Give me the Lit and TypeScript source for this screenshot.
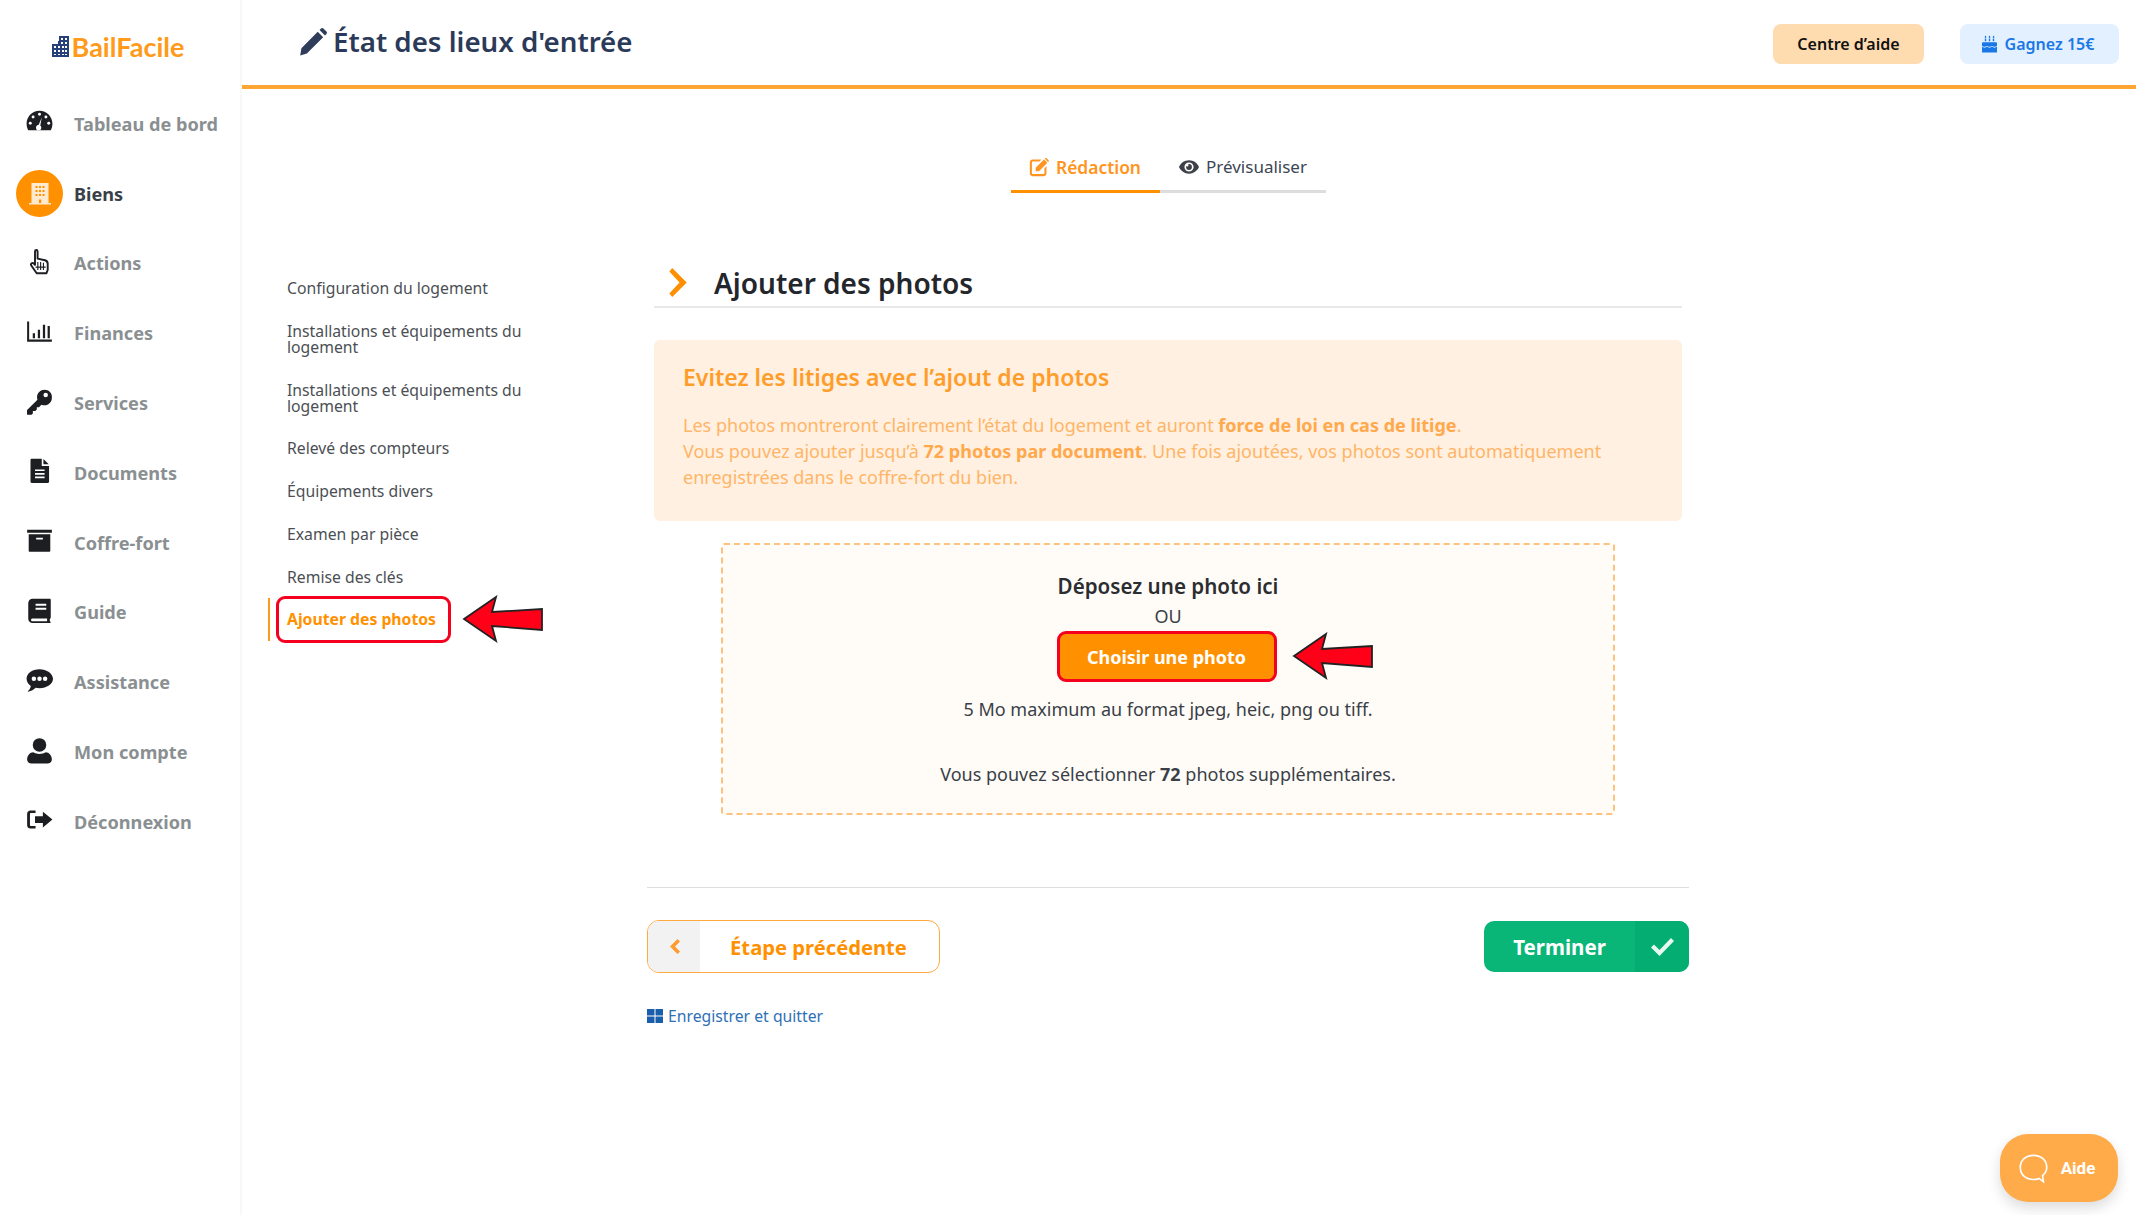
import { LitElement, html, css, svg } from "lit";
import { customElement } from "lit/decorators.js";

const ICONS: Record<string, unknown> = {
  gauge: svg`<path d="M12 2.500C5.600 2.500.5 7.600.5 14c0 1.800.4 3.500 1.100 5 .2.500.7.800 1.200.8h18.400c.5 0 1-.3 1.200-.8.7-1.500 1.100-3.200 1.100-5C23.500 7.600 18.400 2.500 12 2.500z"/><g fill="#fff"><circle cx="12" cy="5.500" r="1.300"/><circle cx="6.300" cy="8" r="1.300"/><circle cx="17.700" cy="8" r="1.300"/><circle cx="3.800" cy="13.500" r="1.300"/><circle cx="20.200" cy="13.500" r="1.300"/><path d="M14 8.500l-1.300 7c.6.500.9 1.200.9 2 0 .9-.4 1.700-1.100 2.300H9.900c-.7-.6-1-1.400-1-2.300 0-1.400 1-2.500 2.400-2.600z"/></g>`,
  hand: svg`<path fill="none" stroke="currentColor" stroke-width="1.700" stroke-linejoin="round" d="M8 3C8 1.300 10.300 1.300 10.300 3V9.500l6.500 1.400c1.500.4 2.500 1.400 2.500 3V19c0 .6-.2 1.200-.5 1.700l-.7 1.800H9.500L4.700 15.500c-1-1.500 1-3 2.200-1.700L8 15z"/><path stroke="currentColor" stroke-width="1" d="M10.500 12.500v7M13 12.500v7M15.500 13v6.500M8.500 17h9"/>`,
  chart: svg`<path d="M1 3h1.800v16.200H23V21H1z"/><path d="M6 13.500h2v4.500H6zM10.500 10.500h2V18h-2zM15 6h2v12h-2zM19.200 7h2v11h-2z"/>`,
  key: svg`<path fill-rule="evenodd" d="M23 7.500C23 4 20 1.500 16.500 1.500c-3.700 0-6.700 3-6.700 6.700 0 .8.100 1.500.4 2.200L1.200 19.300c-.2.200-.3.400-.3.700v3c0 .5.400.8.800.8h3.200l1.200-1.200v-2.200h2.200l1.300-1.300v-2h2l2.100-2.300c.9.400 1.800.6 2.800.6 3.700 0 6.500-3 6.500-6.700zm-3.500-1.300a2 2 0 1 1-4 0 2 2 0 0 1 4 0z"/>`,
  file: svg`<path fill-rule="evenodd" d="M4 2.500C4 2 4.500 1.500 5 1.500h9v6.500h6.500v14c0 .5-.5 1-1 1H5c-.5 0-1-.5-1-1zM8 11v1.500h8.500V11zm0 3.200v1.500h8.500v-1.500zm0 3.200v1.500h8.500v-1.500z"/><path d="M15.500 1.800l4.700 4.700h-4.700z"/>`,
  archive: svg`<path fill-rule="evenodd" d="M1 2.500h22v2.500H1zM2.400 6.500h19.200V21c0 .5-.4 1-1 1H3.400c-.6 0-1-.5-1-1zM9 9.500v1.500h6V9.500z"/>`,
  book: svg`<path fill-rule="evenodd" d="M6 1.500h15c.6 0 1 .4 1 1v15.800c0 .5-.5.800-.7 1-.2.600-.2 1.700 0 2.200.3.200.7.500.7 1 0 .3-.3.500-.8.500H6c-2.400 0-4-1.400-4-3.700V5.500c0-2.300 1.600-4 4-4zm2.500 4.500v1.800h9.500V6zm0 3.500v1.800h9.500V9.500zM5.800 19.200c-.8 0-1.300.5-1.300 1.200s.5 1.100 1.300 1.100h13a9 9 0 0 1 0-2.300z"/>`,
  chat: svg`<path fill-rule="evenodd" d="M12 2C5.600 2 .5 5.600.5 10.500c0 2.600 1.500 4.900 3.800 6.400-.3 2-1.300 3.400-3 5 2.800-.3 5.300-1.400 7.300-3.400 1.100.2 2.200.4 3.400.4 6.400 0 12-3.800 12-8.400S18.400 2 12 2zM7 8.500a2 2 0 1 1 0 4 2 2 0 0 1 0-4zm5 0a2 2 0 1 1 0 4 2 2 0 0 1 0-4zm5 0a2 2 0 1 1 0 4 2 2 0 0 1 0-4z"/>`,
  user: svg`<circle cx="12" cy="7" r="6"/><path d="M1 20c0-3.500 2.500-6.500 5.500-6.500 1.500 1 3.500 1.500 5.500 1.500s4-.5 5.500-1.500c3 0 5.500 3 5.500 6.500 0 2-1.500 3.500-3.500 3.500h-15C2.500 23.500 1 22 1 20z"/>`,
  signout: svg`<path d="M23.500 12L15 5v4H8v6h7v4z"/><path d="M8.500 4H4C2.300 4 1 5.300 1 7v10c0 1.700 1.300 3 3 3h4.500v-2.200H4.500c-.6 0-1-.4-1-1V7.200c0-.6.400-1 1-1h4z"/>`,
};

const NAV = [
  ["gauge", "Tableau de bord"],
  ["building", "Biens"],
  ["hand", "Actions"],
  ["chart", "Finances"],
  ["key", "Services"],
  ["file", "Documents"],
  ["archive", "Coffre-fort"],
  ["book", "Guide"],
  ["chat", "Assistance"],
  ["user", "Mon compte"],
  ["signout", "Déconnexion"],
];

const STEPS = [
  "Configuration du logement",
  "Installations et équipements du logement",
  "Installations et équipements du logement",
  "Relevé des compteurs",
  "Équipements divers",
  "Examen par pièce",
  "Remise des clés",
];

const arrow = html`<svg class="arrow" viewBox="-2 -2 84 50" aria-hidden="true"><polygon points="0,22 32,0 28,15 78,12 78,33 28,29 32,44" fill="#ff0018" stroke="#222" stroke-width="1.800" /></svg>`;

@customElement("app-root")
export class AppRoot extends LitElement {
  static styles = css`
    :host { display: block; font-family: "Noto Sans", "Liberation Sans", sans-serif; color: #333; background: #fff; }
    * , *::before, *::after { box-sizing: border-box; }
    .app { display: grid; grid-template-columns: 242px 1fr; height: 1215px; position: relative; overflow: hidden; }
    aside { border-right: 2px solid #f8f8f8; }
    .logo { height: 89px; display: flex; align-items: center; justify-content: center; gap: 3px; font-family: Lato, sans-serif; font-weight: 700; font-size: 27px; color: #ff9a1a; padding: 4px 4px 0 0; }
    .logo svg { width: 17px; height: 21px; }
    .navitem { height: 69.800px; display: flex; align-items: center; font-size: 18.150px; font-weight: 700; color: #8a8f92; }
    .navitem.on { color: #3a3f47; }
    .ic { width: 47px; height: 47px; margin: 0 11px 0 16px; flex: none; display: flex; align-items: center; justify-content: center; color: #1c1e21; border-radius: 50%; }
    .ic svg { width: 27px; height: 27px; fill: currentColor; position: relative; top: -2px; }
    .on .ic { background: #ff9100; }
    .on .ic svg { width: 22px; height: 22px; top: 0; }
    header { height: 89px; border-bottom: 4px solid #ffa534; display: flex; align-items: center; padding: 3px 17px 0 57px; }
    h1 { margin: 0; flex: 1; display: flex; align-items: center; gap: 5px; font-size: 27.700px; font-weight: 600; color: #2b3a58; line-height: 1; position: relative; top: -2.500px; }
    h1 svg { width: 29px; height: 29px; fill: #2f3d5a; }
    .hbtn { height: 40px; border-radius: 8px; display: flex; align-items: center; justify-content: center; font-size: 16px; font-weight: 600; }
    .help { width: 151px; background: #ffdbb0; color: #111; margin-right: 36px; }
    .gift { width: 159px; background: #e2f0ff; color: #1a78e6; gap: 8px; padding-right: 3px; }
    .gift svg { width: 15px; height: 18px; fill: #1a78e6; }
    .tabs { margin: 54px 0 0 405px; width: 1042px; display: flex; justify-content: center; }
    .tab { height: 50px; border-bottom: 3px solid #ddd; display: flex; align-items: center; justify-content: center; gap: 7px; font-size: 17px; color: #3c4654; }
    .tab svg { width: 20px; height: 20px; }
    .tab.on { width: 149px; border-color: #ff9100; color: #ff9420; font-weight: 600; font-size: 17.400px; }
    .tab.off { width: 166px; padding-left: 1px; }
    .body { display: grid; grid-template-columns: 405px 1042px; }
    .steps { padding: 87px 0 0 45px; display: flex; flex-direction: column; gap: 26.750px; list-style: none; margin: 0; }
    .steps li { width: 250px; font-size: 15.750px; line-height: 16px; color: #4b4f54; position: relative; }
    .steps li.cur { color: #ff9100; font-weight: 700; }
    .steps li.cur::before { content: ""; position: absolute; left: -11px; right: 86px; top: -15.500px; height: 47px; border: 3px solid #f5001e; border-radius: 9px; }
    .steps li.cur::after { content: ""; position: absolute; left: -19px; top: -13px; height: 43px; width: 2px; background: #ff9a1a; }
    .arrow { position: absolute; width: 84px; height: 50px; }
    .steps .arrow { left: 175px; top: -16px; }
    .content { padding: 0 7px; }
    .h2 { height: 43px; margin-top: 72px; border-bottom: 2px solid #e9e9e9; display: flex; align-items: center; font-size: 28px; font-weight: 600; color: #23262b; }
    .h2 svg { width: 20px; height: 29px; margin: 0 25px 6px 15px; fill: #ff8f00; flex: none; }
    .h2 span { position: relative; top: -3px; }
    .alert { margin-top: 32px; background: #fff0e1; border-radius: 6px; height: 181px; padding: 22px 29px; color: #ffb566; font-size: 18.050px; line-height: 26px; }
    .alert h3 { margin: 0 0 20px; font-size: 23px; line-height: 30px; font-weight: 600; color: #ff9d2b; }
    .alert b { font-weight: 700; color: #ffa84c; }
    .drop { margin: 22px 67px 0; height: 272px; border: 2px dashed #ffc27e; background: #fffcf8; border-radius: 3px; display: flex; flex-direction: column; align-items: center; padding-top: 25px; font-size: 18px; color: #3a3f47; }
    .drop .t { font-size: 20.600px; font-weight: 600; line-height: 32px; color: #2b2d31; }
    .drop .ou { line-height: 28px; }
    .choose { position: relative; width: 220px; height: 51px; flex: none; border: 3px solid #f5001e; border-radius: 9px; background: #ff9100; color: #fff; font-size: 18px; font-weight: 700; display: flex; align-items: center; justify-content: center; margin: 1px 3px 0 0; }
    .choose .arrow { left: 232px; top: -2px; }
    .drop .m { margin-top: 14px; line-height: 26px; }
    .drop .s { margin-top: 39px; line-height: 26px; }
    .drop .s b { font-weight: 700; }
    .rule { height: 1px; background: #dedede; margin: 72px -7px 0; }
    .actions { margin: 32px -7px 0; display: flex; justify-content: space-between; align-items: flex-start; }
    .prev { width: 293px; height: 53px; border: 1.500px solid #ffa93f; border-radius: 12px; display: flex; overflow: hidden; color: #ff9100; font-size: 20.200px; font-weight: 700; }
    .prev i { width: 52px; background: #f2f2f2; display: flex; align-items: center; justify-content: center; }
    .prev i svg { width: 11px; height: 15px; fill: #ff9a2e; }
    .prev span { flex: 1; display: flex; align-items: center; justify-content: center; padding-right: 2px; }
    .done { width: 205px; height: 51px; margin-top: 1px; border-radius: 10px; overflow: hidden; display: flex; background: #09b678; color: #fff; font-size: 20.500px; font-weight: 700; }
    .done span { flex: 1; display: flex; align-items: center; justify-content: center; }
    .done i { width: 54px; background: #04ad71; display: flex; align-items: center; justify-content: center; }
    .done i svg { width: 23px; height: 18px; fill: #e6f8f0; }
    .save { margin: 33px -7px 0; display: flex; align-items: center; gap: 5px; font-size: 15.750px; color: #2f70b5; line-height: 20px; }
    .save svg { width: 16px; height: 16px; fill: #1a5fab; }
    .aide { position: absolute; left: 2000px; top: 1134px; width: 118px; height: 68px; padding-right: 6px; border-radius: 28px; background: #ffab4a; box-shadow: 0 6px 14px rgba(0,0,0,.14); display: flex; align-items: center; justify-content: center; gap: 11px; color: #fff; font: 700 17px Roboto, sans-serif; }
    .aide svg { width: 33px; height: 33px; fill: none; stroke: #fff; stroke-width: 1.500; }
  `;

  private icon(n: string) {
    if (n === "building") {
      return html`<svg viewBox="0 0 22 22"><path fill="#ffe9cf" fill-rule="evenodd" d="M2.500 0h17v20H22v1.500H0V20h2.500zM6.500 3v2h2V3zm3.500 0v2h2V3zm3.500 0v2h2V3zM6.500 7v2h2V7zM10 7v2h2V7zm3.500 0v2h2V7zM6.500 11v2h2v-2zm3.500 0v2h2v-2zm3.500 0v2h2v-2zM10 16.500V20h2.200v-3.500z"/></svg>`;
    }
    return html`<svg viewBox="0 0 24 24">${ICONS[n]}</svg>`;
  }

  render() {
    return html`<div class="app">
      <aside>
        <div class="logo">
          <svg viewBox="0 0 17 21"><path fill="#27407a" fill-rule="evenodd" d="M0 8h6V5h1V0h10v21H0zM9 2v2h2V2zm4 0v2h2V2zM9 6v2h2V6zm4 0v2h2V6zM2 10v2h2v-2zm4 0v2h2v-2zm4 0v2h2v-2zm3 0v2h2v-2zM2 14v2h2v-2zm4 0v2h2v-2zm4 0v2h2v-2zm3 0v2h2v-2zM2 18v1h2v-1zm4 0v1h2v-1zm4 0v1h2v-1zm3 0v1h2v-1z"/></svg>
          <span>BailFacile</span>
        </div>
        <nav>
          ${NAV.map(([i, t]) => html`<div class="navitem ${t === "Biens" ? "on" : ""}"><span class="ic">${this.icon(i)}</span>${t}</div>`)}
        </nav>
      </aside>
      <main>
        <header>
          <h1>
            <svg viewBox="0 0 24 24"><path d="M2 17.500L15.500 4l4.500 4.500L6.500 22 1 23.500zM17 2.500l1.200-1.200c.6-.6 1.500-.6 2 0l2.500 2.500c.6.600.6 1.400 0 2L21.500 7z"/></svg>
            État des lieux d'entrée
          </h1>
          <div class="hbtn help">Centre d’aide</div>
          <div class="hbtn gift">
            <svg viewBox="0 0 16 18"><path d="M0 12c1.300 0 1.300 1 2.700 1s1.300-1 2.600-1 1.400 1 2.700 1 1.300-1 2.700-1 1.300 1 2.600 1 1.400-1 2.700-1v6H0zM1 7h14c.6 0 1 .4 1 1v3c-1.300 0-1.400 1-2.700 1s-1.300-1-2.600-1-1.400 1-2.700 1-1.300-1-2.700-1-1.300 1-2.600 1S1.300 11 0 11V8c0-.6.400-1 1-1zM3 3h1.500v3H3zm4.250 0h1.500v3h-1.500zm4.250 0H13v3h-1.500zM3.700 0c.7.800.9 1.300.9 1.700 0 .4-.4.800-.9.800s-.8-.4-.8-.8c0-.4.200-.9.800-1.700zm4.300 0c.7.800.9 1.300.9 1.700 0 .4-.4.800-.9.800s-.8-.4-.8-.8c0-.4.200-.9.800-1.700zm4.300 0c.7.800.9 1.300.9 1.700 0 .4-.4.800-.9.800s-.8-.4-.8-.8c0-.4.200-.9.800-1.700z"/></svg>
            Gagnez 15€
          </div>
        </header>
        <div class="tabs">
          <div class="tab on">
            <svg viewBox="0 0 24 24" fill="#ff9420"><path d="M4.500 3H15l-2.500 2.500h-8c-.6 0-1 .4-1 1v13c0 .6.400 1 1 1h13c.6 0 1-.4 1-1v-6l2.500-2.500v8.500c0 2-1.600 3.500-3.500 3.500h-13C2.500 23 1 21.500 1 19.500v-13C1 4.500 2.500 3 4.500 3z"/><path d="M8 13L18 3l4 4-10 10H8zM19.500 1.500c.5-.5 1.200-.5 1.700 0l2.300 2.300c.5.500.5 1.200 0 1.700L23 6.200 19 2.200z"/></svg>
            Rédaction
          </div>
          <div class="tab off">
            <svg viewBox="0 0 24 16" fill="#3c4148"><path fill-rule="evenodd" d="M12 0c5.500 0 9.800 3.300 12 8-2.200 4.700-6.500 8-12 8S2.200 12.700 0 8c2.200-4.700 6.500-8 12-8zm0 2.500a5.500 5.500 0 1 0 0 11 5.500 5.500 0 0 0 0-11zM12 4.500a3.500 3.500 0 1 1-3.500 3.500c0-.5.100-.9.300-1.300.3.400.7.600 1.200.6a1.500 1.500 0 0 0 1-2.500c.3-.2.600-.3 1-.3z"/></svg>
            Prévisualiser
          </div>
        </div>
        <div class="body">
          <ul class="steps">
            ${STEPS.map((s) => html`<li>${s}</li>`)}
            <li class="cur">Ajouter des photos ${arrow}</li>
          </ul>
          <div class="content">
            <div class="h2">
              <svg viewBox="0 0 20 30"><path d="M3 0l15 15L3 30l-3-3.500L10.500 15 0 3.500z"/></svg>
              <span>Ajouter des photos</span>
            </div>
            <div class="alert">
              <h3>Evitez les litiges avec l’ajout de photos</h3>
              Les photos montreront clairement l’état du logement et auront <b>force de loi en cas de litige</b>.<br />
              Vous pouvez ajouter jusqu’à <b>72 photos par document</b>. Une fois ajoutées, vos photos sont automatiquement<br />
              enregistrées dans le coffre-fort du bien.
            </div>
            <div class="drop">
              <div class="t">Déposez une photo ici</div>
              <div class="ou">OU</div>
              <div class="choose">Choisir une photo ${arrow}</div>
              <div class="m">5 Mo maximum au format jpeg, heic, png ou tiff.</div>
              <div class="s">Vous pouvez sélectionner <b>72</b> photos supplémentaires.</div>
            </div>
            <div class="rule"></div>
            <div class="actions">
              <div class="prev">
                <i><svg viewBox="0 0 11 15"><path d="M8.500 0L11 2.500 6 7.500l5 5L8.500 15 1 7.500z"/></svg></i>
                <span>Étape précédente</span>
              </div>
              <div class="done">
                <span>Terminer</span>
                <i><svg viewBox="0 0 23 18"><path d="M8.500 18L0 9.500 3 6.500l5.500 5.500L20 0l3 3z"/></svg></i>
              </div>
            </div>
            <div class="save">
              <svg viewBox="0 0 16 16"><path d="M0 1h7.500v6.500H0zM8.500 1H16v6.500H8.500zM0 8.500h7.500V15H0zM8.500 8.500H16V15H8.500z"/></svg>
              Enregistrer et quitter
            </div>
          </div>
        </div>
      </main>
      <div class="aide">
        <svg viewBox="0 0 30 30"><path d="M15 3C8 3 3 7.500 3 14s5 11 12 11c2 0 3.500-.3 5-1l4 3-.8-5.500C25.500 19.500 27 17 27 14 27 7.500 22 3 15 3z"/></svg>
        Aide
      </div>
    </div>`;
  }
}
